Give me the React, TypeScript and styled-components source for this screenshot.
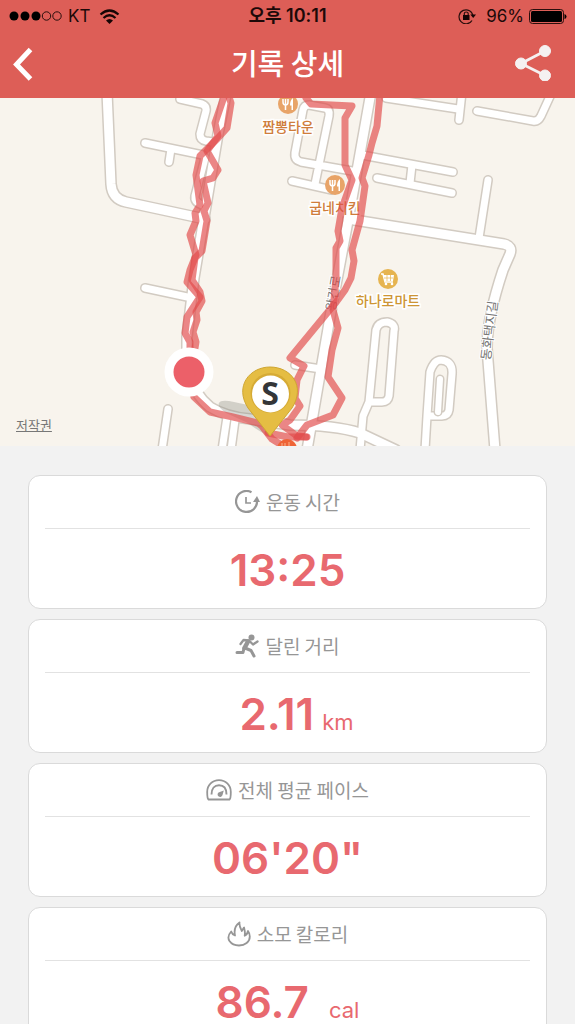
import React from 'react';
import styled, { createGlobalStyle } from 'styled-components';

const korean = '"Noto Sans CJK KR", sans-serif';
const latin = 'Inter, "Noto Sans CJK KR", sans-serif';

const GlobalStyle = createGlobalStyle`
  * { box-sizing: border-box; }
  body { margin: 0; background: #f2f2f2; font-family: ${korean}; }
`;

const Screen = styled.div`
  height: 100vh;
  display: flex;
  flex-direction: column;
  overflow: hidden;
  background: #f2f2f2;
`;

const Header = styled.header`
  flex: none;
  background: #dd5e57;
`;

const StatusBar = styled.div`
  display: grid;
  grid-template-columns: 1fr auto 1fr;
  align-items: center;
  height: 32px;
  padding: 0 8px;
  color: #1c0908;
  font: 400 17px/20px ${latin};
`;

const StatusGroup = styled.div<{ $end?: boolean }>`
  display: flex;
  align-items: center;
  justify-content: ${p => (p.$end ? 'flex-end' : 'flex-start')};
  gap: ${p => (p.$end ? 5 : 6)}px;
`;

const Clock = styled.time`
  font-size: 18px;
  font-weight: 600;
`;

const LockIcon = styled.svg`
  margin-right: 5px;
`;

const TitleBar = styled.div`
  display: grid;
  grid-template-columns: 62px 1fr 48px;
  align-items: center;
  height: 66px;
  padding: 0 18px 4px 4px;
`;

const Title = styled.h1`
  margin: 0;
  padding-bottom: 2px;
  text-align: center;
  color: #fff;
  font: 500 29px/40px ${korean};
`;

const IconButton = styled.button`
  display: flex;
  align-items: center;
  justify-content: center;
  width: 48px;
  height: 48px;
  padding: 0;
  border: 0;
  background: none;
  cursor: pointer;
`;

const MapPanel = styled.section`
  flex: none;
  position: relative;
  height: 348px;
  background: #f8f4ed;
  overflow: hidden;
`;

const MapDrawing = styled.svg`
  display: block;
  width: 100%;
  height: 100%;

  .poi {
    font: 500 14px ${korean};
    text-anchor: middle;
    paint-order: stroke;
    stroke: #fff;
    stroke-width: 3px;
  }
  .street {
    font: 400 13px ${korean};
    text-anchor: middle;
    fill: #777;
    paint-order: stroke;
    stroke: #fff;
    stroke-width: 2px;
  }
  .pin {
    font: 700 32px "Noto Sans", sans-serif;
    text-anchor: middle;
    fill: #343638;
  }
`;

const Copyright = styled.a`
  position: absolute;
  left: 16px;
  bottom: 12px;
  color: #777;
  font: 400 13px/18px ${korean};
`;

const Records = styled.main`
  flex: 1;
  min-height: 0;
  display: flex;
  flex-direction: column;
  gap: 10px;
  padding: 29px 28px 0;
  overflow-y: auto;
  scrollbar-width: none;
`;

const Card = styled.section`
  flex: none;
  height: 134px;
  padding: 0 16px;
  border: 1px solid #dadada;
  border-radius: 12px;
  background: #fff;
`;

const CardTitle = styled.h2`
  display: flex;
  align-items: center;
  justify-content: center;
  gap: 6px;
  height: 53px;
  margin: 0;
  border-bottom: 1px solid #e2e2e2;
  color: #969696;
  font: 400 19px/28px ${korean};
`;

const Value = styled.p<{ $gap?: number; $indent?: number }>`
  display: flex;
  align-items: last baseline;
  justify-content: center;
  gap: ${p => p.$gap ?? 0}px;
  margin: 0;
  padding-top: 21px;
  padding-left: ${p => p.$indent ?? 0}px;
  color: #e8696f;
  font: 600 44px/40px ${latin};
`;

const Unit = styled.span`
  padding-top: 2px;
  font-size: 22px;
  font-weight: 400;
`;

const wideRoads = [
  'M227 -8L218 36L194 180L187 239V272Q194 296 210 309Q226 319 250 321L290 327Q335 327 360 335L396 352',
  'M371 -6L348 123L330 219L307 352',
  'M107 -6L111 86Q112 101 126 104L205 121',
  'M348 121L504 146Q513 148 510 156L503 172Q487 220 487 250L495 352',
];

const roads = [
  'M180 1L202 6Q207 8 206 13L200 36Q200 42 206 43L213 44',
  'M145 45L203 57',
  'M171 51L169 64',
  'M205 60L195 98Q194 104 202 107',
  'M145 190L192 200',
  'M168 311L162 352',
  'M227 319L222 352',
  'M235 322L231 352',
  'M315 86L329 18Q330 11 325 10L309 7Q304 7 303 12L295 55Q294 62 301 64L352 73',
  'M292 83L332 92',
  'M386 0L458 11',
  'M462 -6L459 22',
  'M477 13L533 23Q538 24 541 18L552 -6',
  'M362 57L453 74',
  'M377 80L452 95',
  'M412 67L410 85',
  'M488 82L479 140',
  'M369 304L376 232Q378 224 387 224Q396 226 394 233L389 298Q388 304 382 304H369L363 318L360 352',
  'M425 352L427 318L430 274Q434 262 441 262Q453 263 452 276L449 312Q448 318 442 318H427',
  'M295 267L321 271',
];

const tracks = [
  'M228 -4L231 5L227 30L218 40L200 58L196 77L200 107L195 115L196 123L190 137L196 157L190 172L187 184L200 199L187 219L185 235L190 244V256',
  'M225 -4L215 25L218 38L207 53L218 72L213 80L203 83L208 105L204 113L207 123L202 153L195 160L192 182L200 194L202 203L196 214L197 222L193 234L196 244L194 256',
  'M306 0L311 6L352 8L345 20V67L352 82L342 110L338 133L340 143L336 150V180L333 212L338 230L332 252L328 279L342 300L333 317L307 327L297 340',
  'M380 -4L377 28L372 45L369 57L362 80L365 88L360 123L352 152L354 163L351 180L345 192L337 203L290 260L304 268L297 282L295 300L300 308L290 322L282 327L297 338L307 339',
  'M194 299L210 314L233 319L258 325L262 328L272 341L280 346',
  'M268 335L288 339L306 339',
];

const Fork = ({ x, y }: { x: number; y: number }) => (
  <g transform={`translate(${x} ${y})`}>
    <circle r="10" fill="#e8a468" />
    <path d="M-5 -5V-2Q-5 1 -2.500 1Q0 1 0 -2V-5M-2.500 -5V6" stroke="#fff" strokeWidth="1.500" fill="none" />
    <path d="M5 6H3.500V1.500H2Q2 -4 5 -6Z" fill="#fff" />
  </g>
);

const RouteMap = () => (
  <MapDrawing viewBox="0 0 575 348" preserveAspectRatio="xMidYMid slice" role="img" aria-label="운동 경로">
    <g fill="none" strokeLinecap="round" strokeLinejoin="round">
      <g stroke="#d2cbc2">
        {wideRoads.map(d => <path key={d} d={d} strokeWidth="12" />)}
        {roads.map(d => <path key={d} d={d} strokeWidth="10" />)}
      </g>
      <g stroke="#fff">
        {wideRoads.map(d => <path key={d} d={d} strokeWidth="9" />)}
        {roads.map(d => <path key={d} d={d} strokeWidth="7" />)}
      </g>
      <path d="M440 281L438 314" stroke="#d2cbc2" strokeWidth="9" />
      <path d="M440 281L438 314" stroke="#fff" strokeWidth="6" />
    </g>

    <text className="poi" x="288" y="34" fill="#cf7d3c">짬뽕타운</text>
    <text className="poi" x="335" y="115" fill="#cf7d3c">굽네치킨</text>
    <text className="poi" x="388" y="208" fill="#cd9534">하나로마트</text>
    <text className="street" transform="translate(338 196) rotate(-80)">왕건로</text>
    <text className="street" transform="translate(494 233) rotate(-83)">동화택지길</text>

    <Fork x={288} y={6} />
    <Fork x={335} y={87} />
    <g transform="translate(388 181)">
      <circle r="10" fill="#e6b450" />
      <path d="M-7 -5H-5L-3 3H5" stroke="#fff" strokeWidth="1.500" fill="none" />
      <path d="M-4.500 -4H6L5 2H-3Z" fill="#fff" />
      <path d="M-4 -1H5M-1 -4V2M2.500 -4V2" stroke="#e6b450" strokeWidth=".7" />
      <circle cx="-2" cy="5" r="1.300" fill="#fff" />
      <circle cx="4" cy="5" r="1.300" fill="#fff" />
    </g>

    <path d="M219 305Q221 301 234 304L262 310L269 338Q258 333 248 325L226 315Q217 309 219 305Z" fill="#8c8c84" opacity=".35" />
    <g fill="none" stroke="#e14b4b" strokeOpacity=".67" strokeWidth="7" strokeLinecap="round" strokeLinejoin="round">
      {tracks.map(d => <path key={d} d={d} />)}
    </g>
    <circle cx="287" cy="351" r="10" fill="#ef6436" />
    <path d="M282 345V349M285 345V349M289 344V349" stroke="#f8b58f" strokeWidth="1" />

    <circle cx="189" cy="274" r="24.500" fill="#fff" />
    <circle cx="189" cy="274" r="15.500" fill="#ec6069" />

    <path d="M270 338L248 310C234 288 250 269 270 269C291 269 306 288 292 310Z" fill="#e5bd43" stroke="#cfa632" />
    <circle cx="270.500" cy="295" r="20" fill="#d6ab35" />
    <circle cx="270.500" cy="296" r="18.500" fill="#fff" />
    <text className="pin" x="270" y="307">S</text>
  </MapDrawing>
);

const ClockIcon = () => (
  <svg width="25" height="24" viewBox="0 0 25 24" fill="none" stroke="#969696" strokeWidth="2.200" aria-hidden="true">
    <path d="M16.500 2.200A10.500 10.500 0 1 0 22 10.500" />
    <path d="M11 7V13H16" strokeWidth="1.700" />
    <path d="M18 12L22 6L25 12Z" fill="#969696" stroke="none" />
  </svg>
);

const RunnerIcon = () => (
  <svg width="24" height="24" viewBox="0 0 24 24" fill="none" stroke="#969696" strokeLinecap="round" strokeLinejoin="round" aria-hidden="true">
    <circle cx="16.500" cy="3.500" r="3" fill="#969696" stroke="none" />
    <path d="M5.500 10L8.500 6L14 6.500L18 10.500L22.500 7.500" strokeWidth="2.300" />
    <path d="M13 7.500L9.500 14" strokeWidth="4.500" />
    <path d="M9 14L8 18.500H2" strokeWidth="3" />
    <path d="M10 14L16 16.500L19 22" strokeWidth="3" />
  </svg>
);

const GaugeIcon = () => (
  <svg width="26" height="22" viewBox="0 0 26 22" fill="none" stroke="#969696" strokeWidth="1.800" strokeLinejoin="round" aria-hidden="true">
    <path d="M2.500 20.500Q1.200 19.500 1.200 13C1.200 6 6.500 1.200 13 1.200S24.800 6 24.800 13Q24.800 19.500 23.500 20.500Z" />
    <path d="M5.500 15.500C5.500 9.500 8.500 6.300 13 6.300S20.500 9.500 20.500 15.500" strokeWidth="1.900" />
    <path d="M17.800 11.500L16.500 16A2.500 2.500 0 1 1 12.500 13.500Z" fill="#969696" stroke="none" />
  </svg>
);

const FlameIcon = () => (
  <svg width="24" height="26" viewBox="0 0 24 26" fill="none" stroke="#969696" strokeWidth="1.800" strokeLinejoin="round" aria-hidden="true">
    <path d="M12.500 1.500C8 4.500 6.800 8.500 8 14.500C6 13.800 4.800 12.500 4.200 10.500C1.500 13.500 .6 17 2.500 20C4.500 23 8 24.500 12 24.500C18 24.500 22.800 21 22.800 15.500C22.800 13 22 11.300 21 10C20.500 12.500 19.500 14 17.700 14.700C18.400 10.500 17.500 8.500 17 6.500L14.800 10C13.500 7.500 12 5 12.500 1.500Z" />
  </svg>
);

const records = [
  { title: '운동 시간', value: '13:25', icon: <ClockIcon /> },
  { title: '달린 거리', value: '2.11', unit: 'km', gap: 8, indent: 18, icon: <RunnerIcon /> },
  { title: '전체 평균 페이스', value: '06\'20"', icon: <GaugeIcon /> },
  { title: '소모 칼로리', value: '86.7', unit: 'cal', gap: 20, icon: <FlameIcon /> },
];

export default function App() {
  return (
    <Screen>
      <GlobalStyle />
      <Header>
        <StatusBar>
          <StatusGroup>
            <svg width="54" height="10" viewBox="0 0 54 10" role="img" aria-label="신호 세기">
              <g fill="#000">
                <circle cx="6" cy="5" r="4.500" />
                <circle cx="17" cy="5" r="4.500" />
                <circle cx="28" cy="5" r="4.500" />
              </g>
              <g fill="none" stroke="#2a0f0d">
                <circle cx="38.500" cy="5" r="4.200" />
                <circle cx="49" cy="5" r="4.200" />
              </g>
            </svg>
            <span>KT</span>
            <svg width="26" height="15" viewBox="0 0 26 15" fill="none" stroke="#160505" strokeWidth="2.200" role="img" aria-label="와이파이">
              <path d="M4.500 5.500Q13.500 -2.500 22.500 5.500M7.500 9Q13.500 3.500 19.500 9" />
              <path d="M10 11.500Q13.500 8.500 17 11.500L13.500 15Z" fill="#160505" stroke="none" />
            </svg>
          </StatusGroup>
          <Clock>오후 10:11</Clock>
          <StatusGroup $end>
            <LockIcon width="18" height="16" viewBox="0 0 18 16" fill="none" stroke="#2a0f0d" strokeWidth="1.200" role="img" aria-label="화면 회전 잠금">
              <path d="M14 12.500A7 7 0 1 1 15 8" />
              <path d="M12.300 6.500H18L15.200 10Z" fill="#160505" stroke="none" />
              <rect x="5" y="7" width="6.500" height="5" fill="#160505" stroke="none" />
              <path d="M6.300 7V5.500Q6.300 4 8.200 4T10.200 5.500V7" />
            </LockIcon>
            <span>96%</span>
            <svg width="38" height="15" viewBox="0 0 38 15" role="img" aria-label="배터리">
              <rect x=".5" y=".5" width="34" height="14" rx="3" fill="none" stroke="#2a0f0d" />
              <rect x="2" y="2" width="31" height="11" rx="1.500" />
              <path d="M35.500 5Q37.500 5.500 37.500 7.500T35.500 10Z" />
            </svg>
          </StatusGroup>
        </StatusBar>
        <TitleBar>
          <IconButton aria-label="뒤로">
            <svg width="40" height="36" viewBox="0 0 40 36" fill="none" stroke="#fff" strokeWidth="5">
              <path d="M22.500 4.500L8.500 19.500L22.500 34" />
            </svg>
          </IconButton>
          <Title>기록 상세</Title>
          <IconButton aria-label="공유">
            <svg width="38" height="36" viewBox="0 0 38 36" fill="#f5f1f1" stroke="#f5f1f1">
              <path d="M32 5.500L7 18.500L32 31" fill="none" strokeWidth="2.800" />
              <circle cx="31" cy="6" r="5.500" />
              <circle cx="7" cy="18.500" r="5.500" />
              <circle cx="31" cy="30.500" r="5.500" />
            </svg>
          </IconButton>
        </TitleBar>
      </Header>
      <MapPanel>
        <RouteMap />
        <Copyright href="#copyright">저작권</Copyright>
      </MapPanel>
      <Records>
        {records.map(r => (
          <Card key={r.title}>
            <CardTitle>{r.icon}{r.title}</CardTitle>
            <Value $gap={r.gap} $indent={r.indent}>
              {r.value}
              {r.unit && <Unit>{r.unit}</Unit>}
            </Value>
          </Card>
        ))}
      </Records>
    </Screen>
  );
}
